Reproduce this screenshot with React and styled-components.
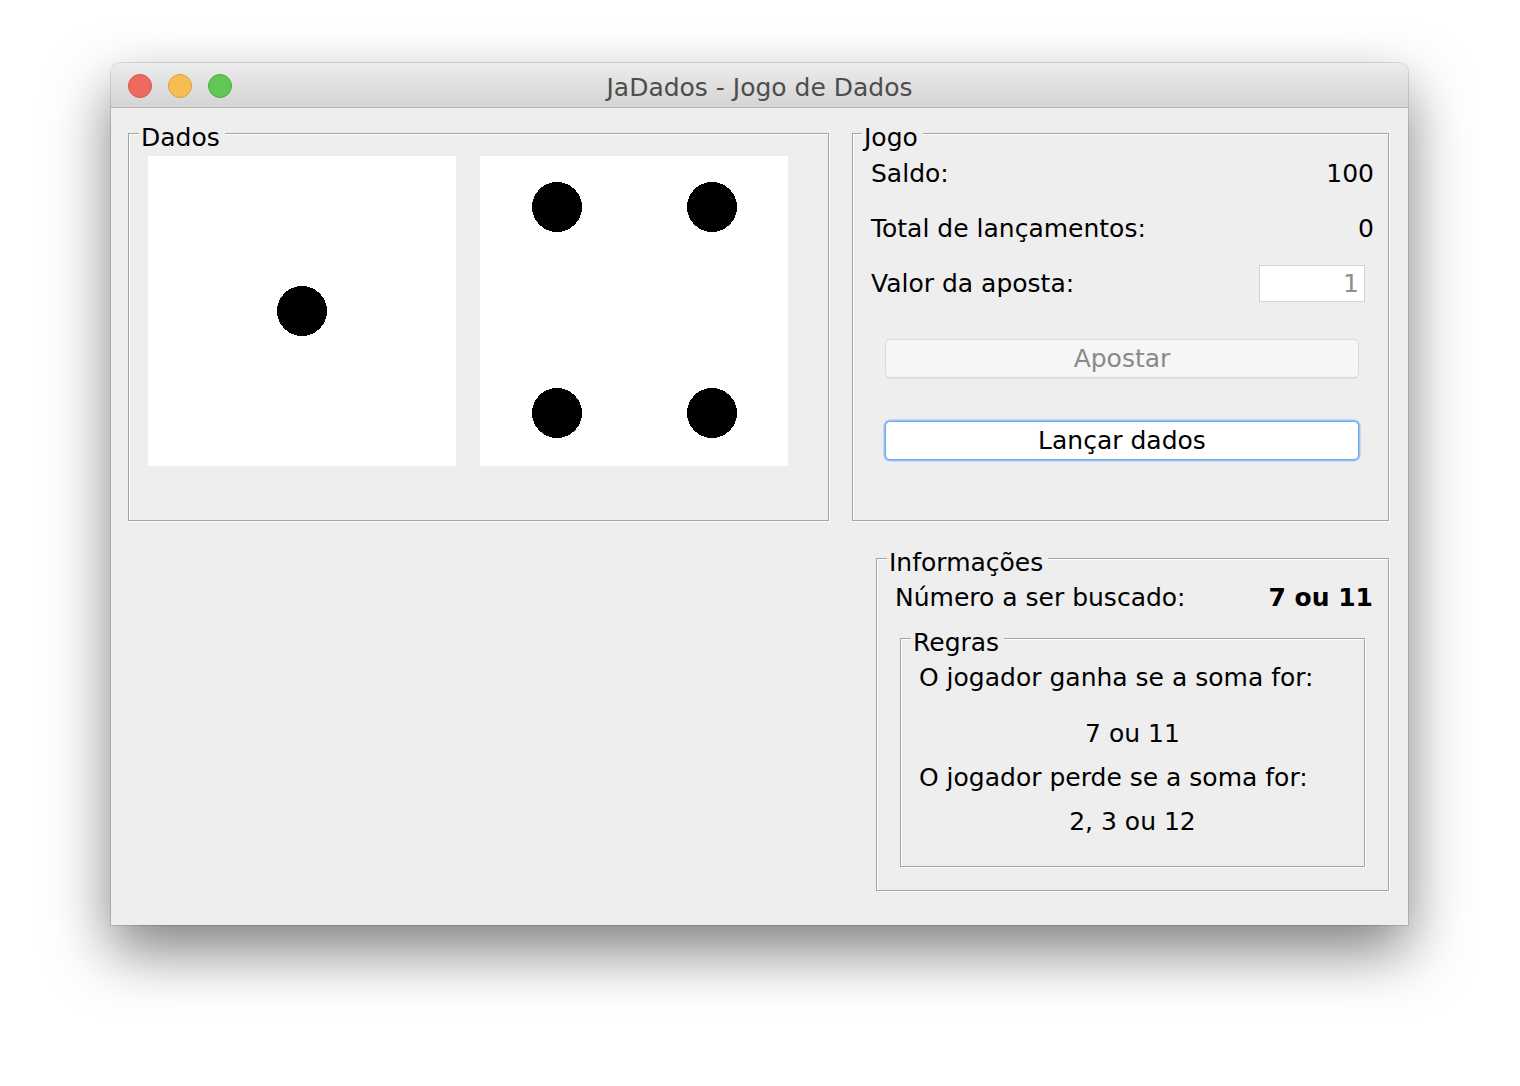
import React from "react";
import styled, { createGlobalStyle } from "styled-components";

const GlobalStyle = createGlobalStyle`
  html, body { margin: 0; padding: 0; background: #ffffff; }
  body { font-family: "DejaVu Sans", "Liberation Sans", sans-serif; color: #000; }
`;

const Stage = styled.div`
  padding: 63px 0 0 111px;
  min-height: 1086px;
  box-sizing: border-box;
`;

const Window = styled.div`
  width: 1297px;
  border-radius: 9px 9px 0 0;
  overflow: hidden;
  box-shadow: 0 0 0 1px rgba(0, 0, 0, 0.12), 0 26px 60px rgba(0, 0, 0, 0.5);
`;

const TitleBar = styled.div`
  height: 44px;
  display: grid;
  grid-template-columns: 1fr auto 1fr;
  align-items: center;
  padding: 0 17px;
  background: linear-gradient(#ececec, #d4d4d4);
  border-bottom: 1px solid #b4b4b4;
`;

const Lights = styled.div`
  display: flex;
  gap: 16px;
  padding-top: 2px;
`;

const Light = styled.span`
  width: 24px;
  height: 24px;
  border-radius: 50%;
  box-sizing: border-box;
  background: ${(p) => p.$fill};
  border: 1px solid ${(p) => p.$edge};
`;

const Title = styled.div`
  font-size: 25px;
  color: #4d4d4d;
  padding-top: 4px;
`;

const Content = styled.div`
  height: 817px;
  box-sizing: border-box;
  background: #eeeeee;
  padding: 25px 19px 0 17px;
  display: grid;
  grid-template-columns: 701px 537px;
  grid-template-rows: auto auto;
  column-gap: 23px;
  align-content: start;
`;

const Box = styled.div`
  display: flex;
  flex-direction: column;
  border: 1px solid #a3a3a3;
  box-shadow: 1px 1px 0 #ffffff, inset 1px 1px 0 #ffffff;
  box-sizing: border-box;
  margin: ${(p) => p.$margin || "0"};
  grid-column: ${(p) => p.$col || "auto"};
  align-self: ${(p) => p.$align || "stretch"};
`;

const Legend = styled.div`
  align-self: flex-start;
  margin: -10px 0 0 ${(p) => p.$ml || 10}px;
  padding: 0 5px 0 2px;
  background: #eeeeee;
  font-size: 25px;
  line-height: 28px;
`;

const DiceRow = styled.div`
  display: flex;
  gap: 24px;
  margin: 4px 0 54px 19px;
`;

const DieFace = styled.svg`
  display: block;
  background: #ffffff;
`;

const Row = styled.div`
  height: 40px;
  display: flex;
  align-items: center;
  justify-content: space-between;
  margin-top: ${(p) => p.$mt || 0}px;
  padding: 0 ${(p) => p.$pr || 14}px 0 ${(p) => p.$pl || 18}px;
  font-size: 25px;
`;

const Value = styled.span`
  font-weight: ${(p) => (p.$bold ? 700 : 400)};
`;

const Field = styled.div`
  width: 106px;
  height: 37px;
  box-sizing: border-box;
  background: #ffffff;
  border: 1px solid #d3d3d3;
  color: #8e8e8e;
  font-size: 25px;
  display: flex;
  align-items: center;
  justify-content: flex-end;
  padding-right: 5px;
  margin-right: 9px;
`;

const Button = styled.div`
  height: 39px;
  box-sizing: border-box;
  margin: ${(p) => p.$mt}px 29px 0 32px;
  border-radius: 5px;
  display: flex;
  align-items: center;
  justify-content: center;
  font-size: 25px;
  background: ${(p) => (p.$focused ? "#ffffff" : "#f6f6f6")};
  color: ${(p) => (p.$focused ? "#000000" : "#8a8a8a")};
  border: 1px solid ${(p) => (p.$focused ? "#6ea6f0" : "#d9d9d9")};
  box-shadow: ${(p) =>
    p.$focused
      ? "0 0 0 1.5px #9cc2f5"
      : "0 1px 0 rgba(0,0,0,0.05)"};
`;

const Line = styled.div`
  height: 40px;
  display: flex;
  align-items: center;
  justify-content: ${(p) => (p.$center ? "center" : "flex-start")};
  padding-left: ${(p) => (p.$center ? 0 : 18)}px;
  margin-top: ${(p) => p.$mt || 0}px;
  font-size: 25px;
`;

const Spacer = styled.div`
  height: ${(p) => p.$h}px;
`;

const pips = {
  1: [[154, 155]],
  4: [
    [77, 51],
    [232, 51],
    [77, 257],
    [232, 257],
  ],
};

function Die({ value }) {
  return (
    <DieFace width="308" height="310" viewBox="0 0 308 310" shapeRendering="crispEdges">
      {pips[value].map(([cx, cy], i) => (
        <circle key={i} cx={cx} cy={cy} r="25" fill="#000" />
      ))}
    </DieFace>
  );
}

export default function App() {
  return (
    <>
      <GlobalStyle />
      <Stage>
        <Window>
          <TitleBar>
            <Lights>
              <Light $fill="#ee6a5f" $edge="#d8534a" />
              <Light $fill="#f6be50" $edge="#d9a13e" />
              <Light $fill="#62c655" $edge="#4fa944" />
            </Lights>
            <Title>JaDados - Jogo de Dados</Title>
            <span />
          </TitleBar>
          <Content>
            <Box>
              <Legend>Dados</Legend>
              <DiceRow>
                <Die value={1} />
                <Die value={4} />
              </DiceRow>
            </Box>
            <Box>
              <Legend $ml={9}>Jogo</Legend>
              <Row $mt={1}>
                <span>Saldo:</span>
                <Value>100</Value>
              </Row>
              <Row $mt={15}>
                <span>Total de lançamentos:</span>
                <Value>0</Value>
              </Row>
              <Row $mt={15}>
                <span>Valor da aposta:</span>
                <Field>1</Field>
              </Row>
              <Button $mt={36}>Apostar</Button>
              <Button $mt={43} $focused>
                Lançar dados
              </Button>
            </Box>
            <Box $col="2" $margin="37px 0 0 24px" $align="start">
              <Legend>Informações</Legend>
              <Row $mt={0} $pr={15}>
                <span>Número a ser buscado:</span>
                <Value $bold>7 ou 11</Value>
              </Row>
              <Box $margin="21px 23px 23px 23px">
                <Legend>Regras</Legend>
                <Line $mt={0}>O jogador ganha se a soma for:</Line>
                <Line $mt={16} $center>
                  7 ou 11
                </Line>
                <Line $mt={4}>O jogador perde se a soma for:</Line>
                <Line $mt={4} $center>
                  2, 3 ou 12
                </Line>
                <Spacer $h={25} />
              </Box>
            </Box>
          </Content>
        </Window>
      </Stage>
    </>
  );
}
